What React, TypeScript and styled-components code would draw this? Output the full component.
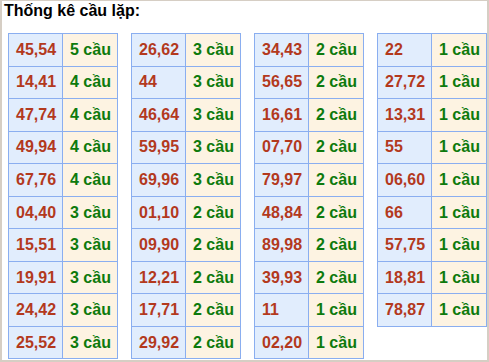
import { Fragment } from 'react';
import styled, { createGlobalStyle } from 'styled-components';

const GlobalStyle = createGlobalStyle`
  html, body {
    margin: 0;
    padding: 0;
    background: #ffffff;
  }
  body {
    font-family: "Liberation Sans", Arial, sans-serif;
  }
`;

const Frame = styled.div`
  box-sizing: border-box;
  width: 489px;
  height: 362px;
  border: 2px solid #d6cec4;
  border-top-width: 1px;
  background: #fff;
  overflow: hidden;
`;

const Title = styled.div`
  font-weight: bold;
  font-size: 16px;
  color: #000;
  padding: 1px 0 0 2px;
  height: 31px;
  line-height: 18px;
`;

const Tables = styled.div`
  display: flex;
  align-items: flex-start;
  gap: 13px;
  padding-left: 6px;
`;

const Table = styled.div`
  display: grid;
  grid-template-columns: 54px 55px;
  grid-auto-rows: 32.56px;
  border-left: 1px solid #8aaef0;
  border-top: 1px solid #8aaef0;
  box-sizing: border-box;
  width: 110px;
`;

const Cell = styled.div<{ $kind: 'num' | 'count' }>`
  box-sizing: border-box;
  border-right: 1px solid #8aaef0;
  border-bottom: 1px solid #8aaef0;
  background: ${({ $kind }) => ($kind === 'num' ? '#e1edfd' : '#fdf3e2')};
  color: ${({ $kind }) => ($kind === 'num' ? '#b3391d' : '#0d7a0d')};
  font-weight: bold;
  font-size: 16px;
  display: flex;
  align-items: center;
  padding-left: 7px;
  white-space: nowrap;
`;

const columns: [string, number][][] = [
  [
    ['45,54', 5], ['14,41', 4], ['47,74', 4], ['49,94', 4], ['67,76', 4],
    ['04,40', 3], ['15,51', 3], ['19,91', 3], ['24,42', 3], ['25,52', 3],
  ],
  [
    ['26,62', 3], ['44', 3], ['46,64', 3], ['59,95', 3], ['69,96', 3],
    ['01,10', 2], ['09,90', 2], ['12,21', 2], ['17,71', 2], ['29,92', 2],
  ],
  [
    ['34,43', 2], ['56,65', 2], ['16,61', 2], ['07,70', 2], ['79,97', 2],
    ['48,84', 2], ['89,98', 2], ['39,93', 2], ['11', 1], ['02,20', 1],
  ],
  [
    ['22', 1], ['27,72', 1], ['13,31', 1], ['55', 1], ['06,60', 1],
    ['66', 1], ['57,75', 1], ['18,81', 1], ['78,87', 1],
  ],
];

export default function App() {
  return (
    <>
      <GlobalStyle />
      <Frame>
        <Title>Thống kê cầu lặp:</Title>
        <Tables>
          {columns.map((rows, ci) => (
            <Table key={ci}>
              {rows.map(([pair, n], ri) => (
                <Fragment key={ri}>
                  <Cell $kind="num">{pair}</Cell>
                  <Cell $kind="count">{n} cầu</Cell>
                </Fragment>
              ))}
            </Table>
          ))}
        </Tables>
      </Frame>
    </>
  );
}
